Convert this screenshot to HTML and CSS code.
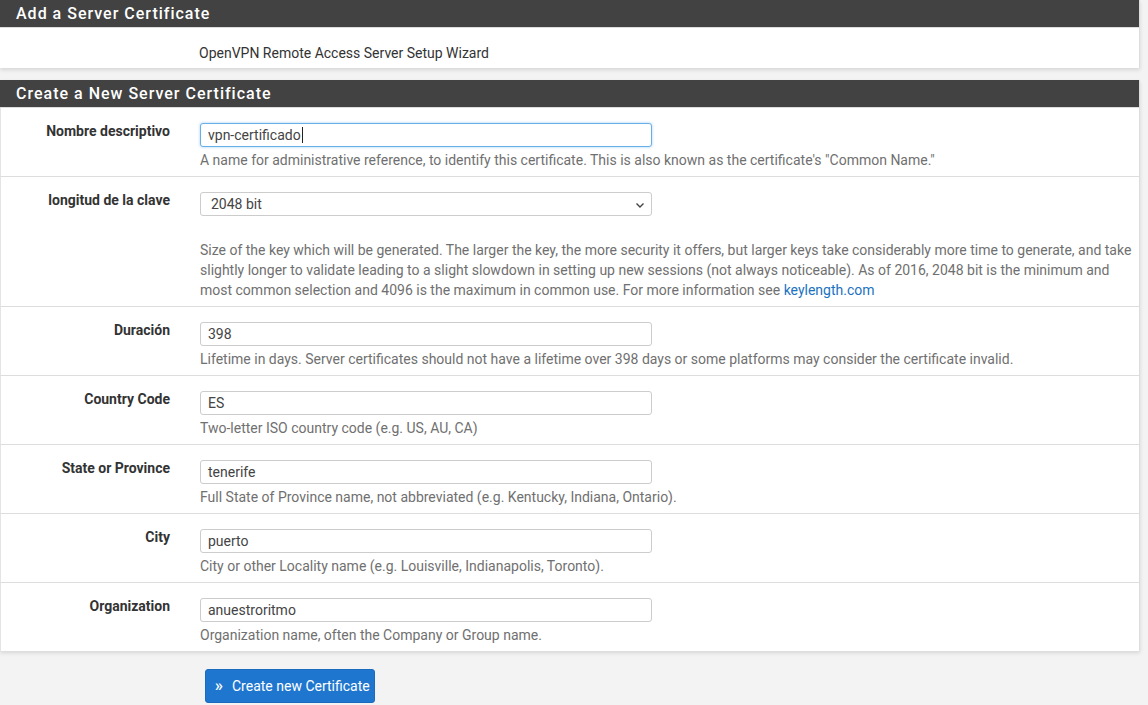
FILE: index.html
```html
<!DOCTYPE html>
<html>
<head>
<meta charset="utf-8">
<link rel="stylesheet" href="styles.css">
</head>
<body>
<div class="page">
  <div class="panel">
    <div class="panel-heading">Add a Server Certificate</div>
    <div class="panel-body intro">
      <div class="label-col"></div>
      <div class="field-col">OpenVPN Remote Access Server Setup Wizard</div>
    </div>
  </div>

  <div class="panel">
    <div class="panel-heading">Create a New Server Certificate</div>
    <div class="row">
      <div class="label-col">Nombre descriptivo</div>
      <div class="field-col">
        <div class="input focus">vpn-certificado<span class="caret"></span></div>
        <div class="help">A name for administrative reference, to identify this certificate. This is also known as the certificate's "Common Name."</div>
      </div>
    </div>
    <div class="row">
      <div class="label-col">longitud de la clave</div>
      <div class="field-col">
        <div class="input select">2048 bit
          <svg class="chev" width="10" height="10" viewBox="0 0 10 10"><path d="M1.5 3.5 L5 7 L8.5 3.5" fill="none" stroke="#444" stroke-width="1.4"/></svg>
        </div>
        <div class="help spaced">Size of the key which will be generated. The larger the key, the more security it offers, but larger keys take considerably more time to generate, and take slightly longer to validate leading to a slight slowdown in setting up new sessions (not always noticeable). As of 2016, 2048 bit is the minimum and most common selection and 4096 is the maximum in common use. For more information see <span class="link">keylength.com</span></div>
      </div>
    </div>
    <div class="row">
      <div class="label-col">Duración</div>
      <div class="field-col">
        <div class="input">398</div>
        <div class="help">Lifetime in days. Server certificates should not have a lifetime over 398 days or some platforms may consider the certificate invalid.</div>
      </div>
    </div>
    <div class="row">
      <div class="label-col">Country Code</div>
      <div class="field-col">
        <div class="input">ES</div>
        <div class="help">Two-letter ISO country code (e.g. US, AU, CA)</div>
      </div>
    </div>
    <div class="row">
      <div class="label-col">State or Province</div>
      <div class="field-col">
        <div class="input">tenerife</div>
        <div class="help">Full State of Province name, not abbreviated (e.g. Kentucky, Indiana, Ontario).</div>
      </div>
    </div>
    <div class="row">
      <div class="label-col">City</div>
      <div class="field-col">
        <div class="input">puerto</div>
        <div class="help">City or other Locality name (e.g. Louisville, Indianapolis, Toronto).</div>
      </div>
    </div>
    <div class="row last">
      <div class="label-col">Organization</div>
      <div class="field-col">
        <div class="input">anuestroritmo</div>
        <div class="help">Organization name, often the Company or Group name.</div>
      </div>
    </div>
  </div>

  <div class="actions">
    <button class="btn"><span class="icon">&raquo;</span>Create new Certificate</button>
  </div>
</div>
</body>
</html>
```

FILE: styles.css
```css
html, body {
  margin: 0;
  padding: 0;
  background: #f3f3f3;
  font-family: Roboto, "Liberation Sans", Arial, sans-serif;
  font-size: 14px;
  color: #333;
}

.page {
  width: 1140px;
}

.panel {
  background: #fff;
  border-right: 1px solid #ddd;
  box-shadow: 0 2px 4px rgba(0, 0, 0, 0.12);
  margin-bottom: 12px;
}

.panel-heading {
  background: #424242;
  color: #fff;
  height: 28px;
  line-height: 28px;
  padding-left: 16px;
  font-size: 16px;
  font-weight: 500;
  letter-spacing: 1px;
  border-bottom: 1px solid #ddd;
  box-sizing: border-box;
}

.panel-body.intro {
  display: flex;
  height: 40px;
  align-items: flex-start;
  padding-top: 16px;
  line-height: 18px;
  box-sizing: border-box;
  color: #333;
}

.label-col {
  width: 184px;
  flex: 0 0 184px;
  box-sizing: border-box;
  padding-right: 15px;
  text-align: right;
  font-weight: 700;
  color: #333;
}

.field-col {
  padding-left: 15px;
  flex: 1;
}

.row {
  display: flex;
  padding: 15px 0 6px;
  border-bottom: 1px solid #ddd;
  border-left: 1px solid #e4e4e4;
}

.row.last {
  border-bottom: none;
}

.row .label-col {
  line-height: 18px;
  margin-top: -1px;
}

.input {
  position: relative;
  width: 452px;
  height: 24px;
  box-sizing: border-box;
  border: 1px solid #ccc;
  border-radius: 3px;
  padding: 0 7px;
  line-height: 22px;
  color: #444;
  background: #fff;
}

.input.focus {
  border-color: #66afe9;
  box-shadow: 0 0 3px rgba(102, 175, 233, 0.6);
}

.caret {
  display: inline-block;
  width: 1px;
  height: 16px;
  background: #222;
  vertical-align: -3px;
  margin-left: 1px;
}

.input.select {
  padding-left: 10px;
}

.chev {
  position: absolute;
  right: 6px;
  top: 7px;
}

.help {
  margin-top: 3px;
  line-height: 20px;
  color: #707070;
  padding-right: 0;
}

.help.spaced {
  margin-top: 24px;
}

.link {
  color: #1a72c0;
}

.actions {
  padding: 6px 0 0 205px;
}

.btn {
  background: #1e76cf;
  color: #fff;
  border: 1px solid #1a6bbd;
  border-radius: 3px;
  height: 34px;
  width: 170px;
  padding: 0 0 1px 0;
  font-family: Roboto, "Liberation Sans", Arial, sans-serif;
  font-size: 14px;
  display: flex;
  align-items: center;
}

.btn .icon {
  font-size: 17px;
  font-weight: 500;
  width: 26px;
  text-align: center;
  padding-bottom: 2px;
}
```
